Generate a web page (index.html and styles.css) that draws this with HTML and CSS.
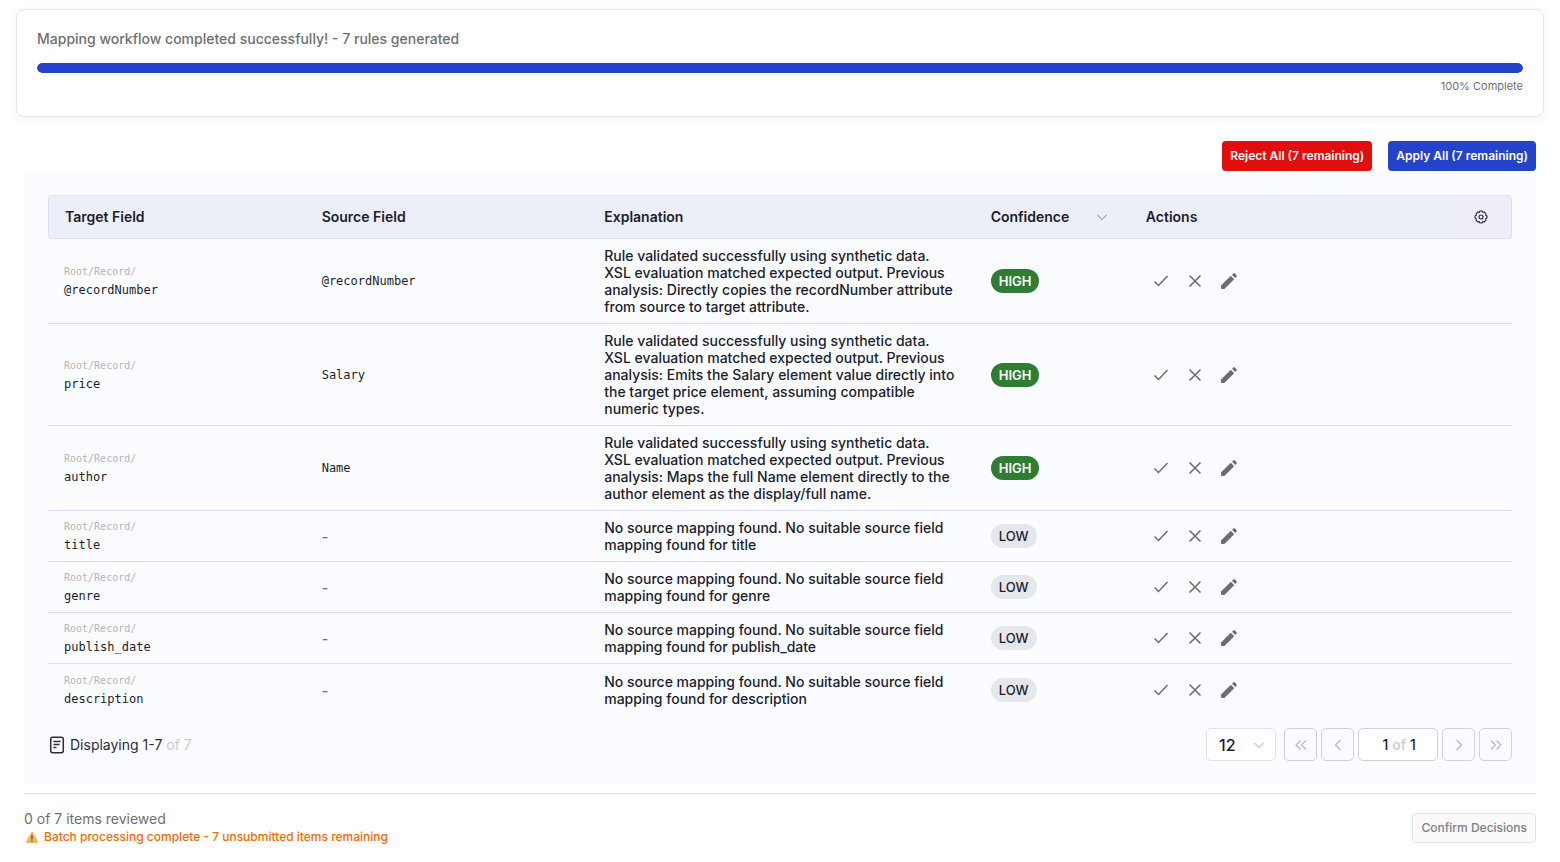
FILE: index.html
```html
<!DOCTYPE html>
<html lang="en">
<head>
    <meta charset="UTF-8">
    <meta name="viewport" content="width=device-width, initial-scale=1.0">
    <title>Mapping Workflow</title>
    <link rel="stylesheet" href="styles.css">
</head>
<body>
    <!-- shared icons -->
    <svg class="icon-defs" aria-hidden="true">
        <symbol id="icon-check" viewBox="0 0 20 20">
            <path d="M3.5 10.5 L7.5 14.5 L16.5 5" fill="none" stroke="currentColor" stroke-width="1.5"/>
        </symbol>
        <symbol id="icon-close" viewBox="0 0 20 20">
            <path d="M4.5 4.5 L15.5 15.5 M15.5 4.5 L4.5 15.5" fill="none" stroke="currentColor" stroke-width="1.6"/>
        </symbol>
        <symbol id="icon-edit" viewBox="0 0 20 20">
            <path d="M2 14.6 L11.8 4.8 L15.2 8.2 L5.4 18 H3 Q2 18 2 17 Z" fill="currentColor"/>
            <path d="M13 3.8 L14.4 2.4 Q15.1 1.8 15.8 2.4 L17.6 4.2 Q18.2 4.9 17.6 5.6 L16.2 7 Z" fill="currentColor"/>
        </symbol>
        <symbol id="icon-down" viewBox="0 0 12 12">
            <path d="M1.5 4 L6 8.5 L10.5 4" fill="none" stroke="currentColor" stroke-width="1.2"/>
        </symbol>
        <symbol id="icon-left" viewBox="0 0 12 12">
            <path d="M8.5 1 L3.5 6 L8.5 11" fill="none" stroke="currentColor" stroke-width="1.2"/>
        </symbol>
        <symbol id="icon-right" viewBox="0 0 12 12">
            <path d="M3.5 1 L8.5 6 L3.5 11" fill="none" stroke="currentColor" stroke-width="1.2"/>
        </symbol>
        <symbol id="icon-first" viewBox="0 0 12 12">
            <path d="M5.5 1.5 L1 6 L5.5 10.5 M11 1.5 L6.5 6 L11 10.5" fill="none" stroke="currentColor" stroke-width="1.1"/>
        </symbol>
        <symbol id="icon-last" viewBox="0 0 12 12">
            <path d="M1 1.5 L5.5 6 L1 10.5 M6.5 1.5 L11 6 L6.5 10.5" fill="none" stroke="currentColor" stroke-width="1.1"/>
        </symbol>
    </svg>

    <!-- progress -->
    <section class="progress-card">
        <p class="progress-message">Mapping workflow completed successfully! - 7 rules generated</p>
        <div class="progress-track" role="progressbar" aria-valuenow="100" aria-valuemin="0" aria-valuemax="100">
            <div class="progress-fill" style="width: 100%"></div>
        </div>
        <p class="progress-percent">100% Complete</p>
    </section>

    <main class="content">
        <div class="bulk-actions">
            <button type="button" class="btn btn-reject">Reject All (7 remaining)</button>
            <button type="button" class="btn btn-apply">Apply All (7 remaining)</button>
        </div>

        <div class="panel">
            <table class="rules">
                <colgroup>
                    <col class="col-target">
                    <col class="col-source">
                    <col class="col-explanation">
                    <col class="col-confidence">
                    <col>
                    <col class="col-settings">
                </colgroup>
                <thead>
                    <tr>
                        <th>Target Field</th>
                        <th>Source Field</th>
                        <th>Explanation</th>
                        <th>
                            <div class="sortable">
                                Confidence
                                <button type="button" class="icon-btn sort-btn" aria-label="Sort by confidence"><svg class="icon-small"><use href="#icon-down"/></svg></button>
                            </div>
                        </th>
                        <th>Actions</th>
                        <th class="settings-cell">
                            <button type="button" class="icon-btn settings-btn" aria-label="Table settings">
                                <svg class="icon-gear" viewBox="0 0 14 14" fill="none" stroke="currentColor">
                                    <path d="M5.9 1 H8.1 L8.7 2.4 L10.1 1.9 L12 3.8 L11.6 5.2 L13 5.9 V8.1 L11.6 8.8 L12 10.2 L10.2 12 L8.8 11.6 L8.1 13 H5.9 L5.2 11.6 L3.8 12 L2 10.2 L2.4 8.8 L1 8.1 V5.9 L2.4 5.2 L2 3.8 L3.8 2 L5.2 2.4 Z" stroke-width="1.1" stroke-linejoin="round"/>
                                    <circle cx="7" cy="7" r="2" stroke-width="1.2"/>
                                </svg>
                            </button>
                        </th>
                    </tr>
                </thead>
                <tbody>
                    <tr>
                        <td><div class="path">Root/Record/</div><div class="field">@recordNumber</div></td>
                        <td><span class="field">@recordNumber</span></td>
                        <td>Rule validated successfully using synthetic data. XSL evaluation matched expected output. Previous analysis: Directly copies the recordNumber attribute from source to target attribute.</td>
                        <td><span class="badge badge-high">HIGH</span></td>
                        <td colspan="2">
                            <div class="actions">
                                <button type="button" class="icon-btn" aria-label="Accept"><svg class="icon"><use href="#icon-check"/></svg></button>
                                <button type="button" class="icon-btn" aria-label="Reject"><svg class="icon"><use href="#icon-close"/></svg></button>
                                <button type="button" class="icon-btn" aria-label="Edit"><svg class="icon"><use href="#icon-edit"/></svg></button>
                            </div>
                        </td>
                    </tr>
                    <tr>
                        <td><div class="path">Root/Record/</div><div class="field">price</div></td>
                        <td><span class="field">Salary</span></td>
                        <td>Rule validated successfully using synthetic data. XSL evaluation matched expected output. Previous analysis: Emits the Salary element value directly into the target price element, assuming compatible numeric types.</td>
                        <td><span class="badge badge-high">HIGH</span></td>
                        <td colspan="2">
                            <div class="actions">
                                <button type="button" class="icon-btn" aria-label="Accept"><svg class="icon"><use href="#icon-check"/></svg></button>
                                <button type="button" class="icon-btn" aria-label="Reject"><svg class="icon"><use href="#icon-close"/></svg></button>
                                <button type="button" class="icon-btn" aria-label="Edit"><svg class="icon"><use href="#icon-edit"/></svg></button>
                            </div>
                        </td>
                    </tr>
                    <tr>
                        <td><div class="path">Root/Record/</div><div class="field">author</div></td>
                        <td><span class="field">Name</span></td>
                        <td>Rule validated successfully using synthetic data. XSL evaluation matched expected output. Previous analysis: Maps the full Name element directly to the author element as the display/full name.</td>
                        <td><span class="badge badge-high">HIGH</span></td>
                        <td colspan="2">
                            <div class="actions">
                                <button type="button" class="icon-btn" aria-label="Accept"><svg class="icon"><use href="#icon-check"/></svg></button>
                                <button type="button" class="icon-btn" aria-label="Reject"><svg class="icon"><use href="#icon-close"/></svg></button>
                                <button type="button" class="icon-btn" aria-label="Edit"><svg class="icon"><use href="#icon-edit"/></svg></button>
                            </div>
                        </td>
                    </tr>
                    <tr>
                        <td><div class="path">Root/Record/</div><div class="field">title</div></td>
                        <td><span class="empty">-</span></td>
                        <td>No source mapping found. No suitable source field mapping found for title</td>
                        <td><span class="badge badge-low">LOW</span></td>
                        <td colspan="2">
                            <div class="actions">
                                <button type="button" class="icon-btn" aria-label="Accept"><svg class="icon"><use href="#icon-check"/></svg></button>
                                <button type="button" class="icon-btn" aria-label="Reject"><svg class="icon"><use href="#icon-close"/></svg></button>
                                <button type="button" class="icon-btn" aria-label="Edit"><svg class="icon"><use href="#icon-edit"/></svg></button>
                            </div>
                        </td>
                    </tr>
                    <tr>
                        <td><div class="path">Root/Record/</div><div class="field">genre</div></td>
                        <td><span class="empty">-</span></td>
                        <td>No source mapping found. No suitable source field mapping found for genre</td>
                        <td><span class="badge badge-low">LOW</span></td>
                        <td colspan="2">
                            <div class="actions">
                                <button type="button" class="icon-btn" aria-label="Accept"><svg class="icon"><use href="#icon-check"/></svg></button>
                                <button type="button" class="icon-btn" aria-label="Reject"><svg class="icon"><use href="#icon-close"/></svg></button>
                                <button type="button" class="icon-btn" aria-label="Edit"><svg class="icon"><use href="#icon-edit"/></svg></button>
                            </div>
                        </td>
                    </tr>
                    <tr>
                        <td><div class="path">Root/Record/</div><div class="field">publish_date</div></td>
                        <td><span class="empty">-</span></td>
                        <td>No source mapping found. No suitable source field mapping found for publish_date</td>
                        <td><span class="badge badge-low">LOW</span></td>
                        <td colspan="2">
                            <div class="actions">
                                <button type="button" class="icon-btn" aria-label="Accept"><svg class="icon"><use href="#icon-check"/></svg></button>
                                <button type="button" class="icon-btn" aria-label="Reject"><svg class="icon"><use href="#icon-close"/></svg></button>
                                <button type="button" class="icon-btn" aria-label="Edit"><svg class="icon"><use href="#icon-edit"/></svg></button>
                            </div>
                        </td>
                    </tr>
                    <tr>
                        <td><div class="path">Root/Record/</div><div class="field">description</div></td>
                        <td><span class="empty">-</span></td>
                        <td>No source mapping found. No suitable source field mapping found for description</td>
                        <td><span class="badge badge-low">LOW</span></td>
                        <td colspan="2">
                            <div class="actions">
                                <button type="button" class="icon-btn" aria-label="Accept"><svg class="icon"><use href="#icon-check"/></svg></button>
                                <button type="button" class="icon-btn" aria-label="Reject"><svg class="icon"><use href="#icon-close"/></svg></button>
                                <button type="button" class="icon-btn" aria-label="Edit"><svg class="icon"><use href="#icon-edit"/></svg></button>
                            </div>
                        </td>
                    </tr>
                </tbody>
            </table>

            <!-- pagination -->
            <div class="table-footer">
                <div class="displaying">
                    <svg class="icon-list" viewBox="0 0 18 18" fill="none" stroke="currentColor">
                        <rect x="2.7" y="1.2" width="12.6" height="15.6" rx="2" stroke-width="1.5"/>
                        <path d="M5.5 5.5 H12.5 M5.5 8.5 H11.5 M5.5 11.5 H8.5" stroke-width="1.3"/>
                    </svg>
                    <span>Displaying 1-7 <span class="muted">of 7</span></span>
                </div>
                <div class="pager">
                    <div class="page-size">
                        <select aria-label="Rows per page">
                            <option>12</option>
                            <option>24</option>
                            <option>48</option>
                        </select>
                        <svg class="icon-small"><use href="#icon-down"/></svg>
                    </div>
                    <button type="button" class="page-btn" aria-label="First page" disabled><svg class="icon-small"><use href="#icon-first"/></svg></button>
                    <button type="button" class="page-btn" aria-label="Previous page" disabled><svg class="icon-small"><use href="#icon-left"/></svg></button>
                    <div class="page-number">
                        <input type="text" value="1" aria-label="Page">
                        <span class="muted">of</span>
                        <span>1</span>
                    </div>
                    <button type="button" class="page-btn" aria-label="Next page" disabled><svg class="icon-small"><use href="#icon-right"/></svg></button>
                    <button type="button" class="page-btn" aria-label="Last page" disabled><svg class="icon-small"><use href="#icon-last"/></svg></button>
                </div>
            </div>
        </div>

        <footer class="review-bar">
            <div>
                <p class="reviewed">0 of 7 items reviewed</p>
                <p class="warning">
                    <svg class="icon-warning" viewBox="0 0 16 14">
                        <path d="M8 1.5 Q8.5 1.5 8.8 2 L14 12 Q14.3 13 13.3 13 H2.7 Q1.7 13 2 12 L7.2 2 Q7.5 1.5 8 1.5 Z" fill="#f8b35c"/>
                        <path d="M8 5 V9.4 M8 10.4 V11.8" stroke="#6b5a4c" stroke-width="1.4"/>
                    </svg>
                    Batch processing complete - 7 unsubmitted items remaining
                </p>
            </div>
            <button type="button" class="btn btn-confirm" disabled>Confirm Decisions</button>
        </footer>
    </main>
</body>
</html>
```

FILE: styles.css
```css
* {
    box-sizing: border-box;
}

body {
    margin: 0;
    padding: 9px 16px;
    background-color: #fff;
    color: #1b1e2b;
    font-family: Inter, "Liberation Sans", sans-serif;
    font-size: 14px;
    line-height: 17px;
}

p {
    margin: 0;
}

button, input, select {
    font-family: inherit;
}

.icon-defs {
    display: none;
}

svg {
    display: block;
    flex: none;
}

.muted {
    color: #cbcbcf;
}

/* Progress card */
.progress-card {
    padding: 20px;
    border: 1px solid #e5e7eb;
    border-radius: 8px;
    box-shadow: 0 2px 8px rgba(0, 0, 0, 0.05);
}

.progress-message {
    margin-bottom: 16px;
    font-weight: 500;
    color: #6f6f6f;
}

.progress-track {
    height: 10px;
    border-radius: 5px;
    background-color: #e5e7eb;
    overflow: hidden;
}

.progress-fill {
    height: 100%;
    border-radius: 5px;
    background-color: #2443ca;
}

.progress-percent {
    margin-top: 5px;
    margin-bottom: 1px;
    font-size: 11px;
    text-align: right;
    color: #6f6f6f;
}

/* Buttons */
.content {
    margin: 24px 8px 0;
}

.bulk-actions {
    display: flex;
    justify-content: flex-end;
    gap: 16px;
}

.btn {
    height: 30px;
    padding: 0 8px 1px;
    border: none;
    border-radius: 4px;
    font-size: 12px;
    font-weight: 600;
    color: #fff;
    cursor: pointer;
}

.btn-reject {
    background-color: #e20d0d;
}

.btn-apply {
    background-color: #2443ca;
}

.btn-confirm {
    border: 1px solid #e2e2e4;
    background-color: #fafafa;
    color: #808086;
    font-weight: 500;
    cursor: default;
}

.icon-btn {
    display: flex;
    align-items: center;
    justify-content: center;
    width: 30px;
    height: 30px;
    padding: 0;
    border: none;
    background: none;
    color: #6c6d70;
    cursor: pointer;
}

.icon {
    width: 20px;
    height: 20px;
}

.icon-small {
    width: 12px;
    height: 12px;
}

/* Table */
.panel {
    padding: 24px;
    background-color: #fbfcff;
}

.rules {
    width: 100%;
    table-layout: fixed;
    border-collapse: separate;
    border-spacing: 0;
}

.col-target {
    width: 17.6%;
}

.col-source {
    width: 19.3%;
}

.col-explanation {
    width: 26.4%;
}

.col-confidence {
    width: 10.6%;
}

.col-settings {
    width: 62px;
}

.rules th {
    height: 44px;
    padding: 0 16px 1px;
    border-top: 1px solid #dcdff5;
    border-bottom: 1px solid #dcdff5;
    background-color: #eceff8;
    font-weight: 600;
    text-align: left;
}

.rules th:first-child {
    border-left: 1px solid #dcdff5;
    border-radius: 4px 0 0 4px;
}

.rules th.settings-cell {
    padding: 0;
    border-right: 1px solid #dcdff5;
    border-radius: 0 4px 4px 0;
    background-color: #eeeef8;
}

.sortable {
    display: flex;
    align-items: center;
    justify-content: space-between;
}

.sort-btn {
    width: 24px;
    height: 24px;
    color: #a9abb5;
}

.settings-btn {
    margin: 0 auto;
    color: #2b2b40;
}

.icon-gear {
    width: 14px;
    height: 14px;
}

.rules td {
    padding: 8px 16px;
    border-bottom: 1px solid #dcdff5;
    vertical-align: middle;
    font-weight: 500;
}

.rules td:first-child {
    padding: 8px 16px 6px;
}

.rules tr:last-child td {
    height: 52px;
    border-bottom: none;
}

.path {
    font-family: Consolas, "DejaVu Sans Mono", monospace;
    font-size: 10px;
    font-weight: 400;
    line-height: 16px;
    color: #b4b4b6;
}

.field {
    font-family: Consolas, "DejaVu Sans Mono", monospace;
    font-size: 12px;
    font-weight: 400;
    line-height: 20px;
}

.empty {
    color: #6f6f6f;
}

.badge {
    display: block;
    width: fit-content;
    padding: 0 8px;
    border-radius: 12px;
    font-size: 13px;
    line-height: 24px;
}

.badge-high {
    background-color: #2e7d32;
    color: #fff;
    font-weight: 600;
}

.badge-low {
    background-color: #e5e7eb;
}

.actions {
    display: flex;
    gap: 4px;
}

/* Table footer */
.table-footer {
    display: flex;
    align-items: center;
    justify-content: space-between;
    margin-top: 12px;
}

.displaying {
    display: flex;
    align-items: center;
    gap: 4px;
    color: #2b2b40;
}

.icon-list {
    width: 18px;
    height: 18px;
}

.pager {
    display: flex;
    gap: 4px;
}

.page-size {
    display: grid;
    align-items: center;
    width: 70px;
    margin-right: 4px;
}

.page-size select, .page-size svg {
    grid-area: 1 / 1;
}

.page-size select {
    appearance: none;
    height: 33px;
    padding: 0 12px;
    border: 1px solid #dcdff5;
    border-radius: 5px;
    background-color: #fff;
    color: #1b1e2b;
    font-size: 16px;
    font-weight: 500;
}

.page-size svg {
    justify-self: end;
    margin-right: 11px;
    color: #cbcbcf;
    pointer-events: none;
}

.page-btn {
    display: flex;
    align-items: center;
    justify-content: center;
    width: 33px;
    height: 33px;
    padding: 0;
    border: 1px solid #d2d2d6;
    border-radius: 5px;
    background-color: #fbfcff;
    color: #b4b4b8;
}

.page-number {
    display: flex;
    align-items: center;
    justify-content: center;
    gap: 4px;
    width: 80px;
    height: 33px;
    border: 1px solid #d2d2d6;
    border-radius: 5px;
    background-color: #fff;
    font-weight: 500;
}

.page-number input {
    width: 8px;
    padding: 0;
    border: none;
    background: none;
    color: inherit;
    font-size: 14px;
    font-weight: 500;
    text-align: right;
}

/* Review bar */
.review-bar {
    display: flex;
    align-items: center;
    justify-content: space-between;
    margin-top: 8px;
    padding-top: 16px;
    border-top: 1px solid #dedee0;
}

.reviewed {
    line-height: 18px;
    color: #6f6f6f;
}

.warning {
    display: flex;
    align-items: center;
    gap: 4px;
    font-size: 12px;
    line-height: 18px;
    font-weight: 500;
    color: #ef6c00;
}

.icon-warning {
    width: 16px;
    height: 14px;
}
```
